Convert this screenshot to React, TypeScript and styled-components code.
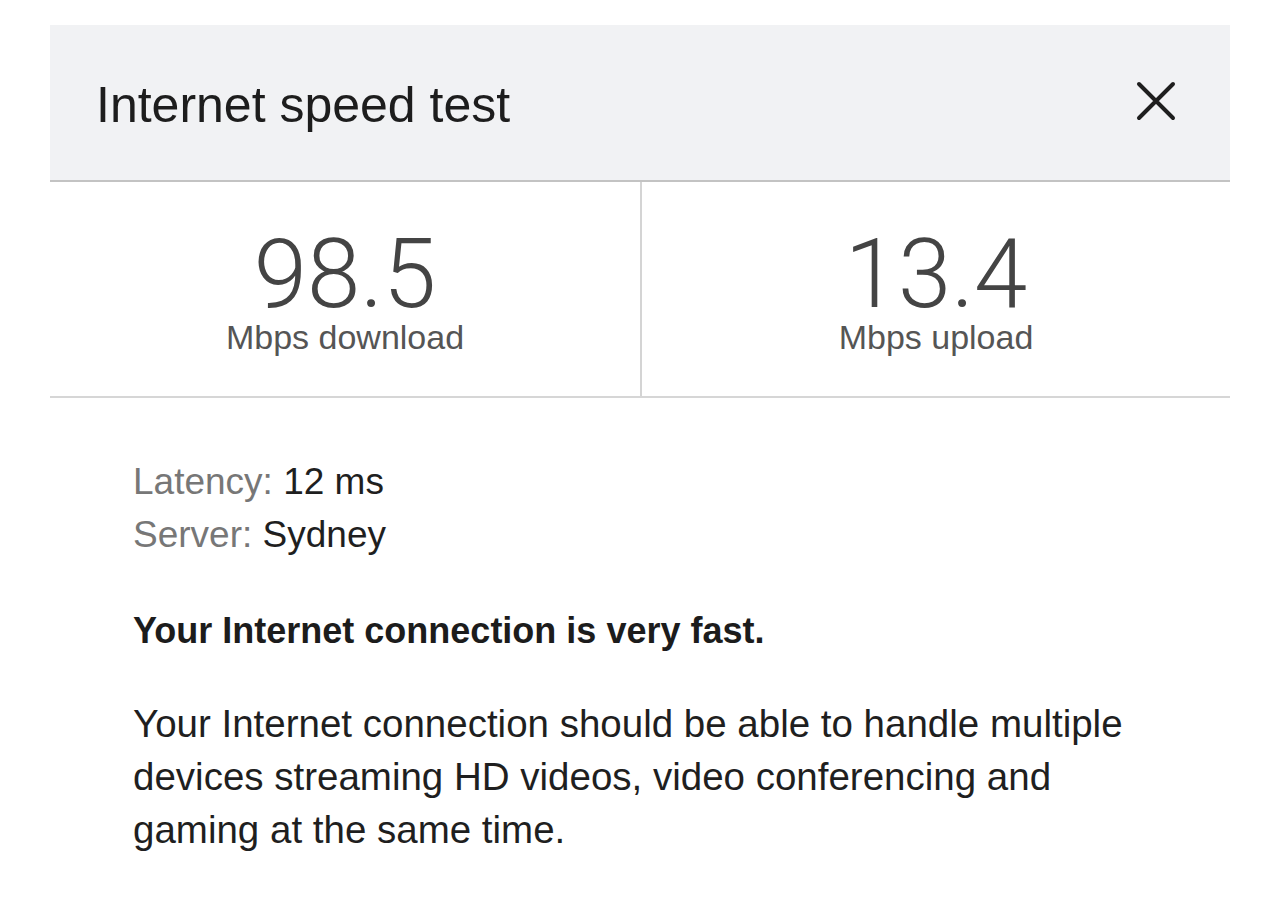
import React from "react";
import styled, { createGlobalStyle } from "styled-components";

const GlobalStyle = createGlobalStyle`
  html, body {
    margin: 0;
    padding: 0;
    background: #ffffff;
  }
  body {
    font-family: "Liberation Sans", Arial, Helvetica, sans-serif;
    color: #1f1f1f;
  }
`;

const Page = styled.div`
  padding: 25px 50px 0 50px;
  width: 1180px;
`;

const Panel = styled.section`
  display: flex;
  flex-direction: column;
  width: 100%;
`;

const Header = styled.header`
  display: flex;
  align-items: center;
  justify-content: space-between;
  height: 155px;
  padding: 0 54px 0 46px;
  background: #f1f2f4;
  border-bottom: 2px solid #c3c3c3;
`;

const Title = styled.h1`
  margin: 0;
  font-family: "Liberation Sans", Arial, sans-serif;
  font-weight: 400;
  font-size: 50px;
  line-height: 1;
  color: #1d1d1d;
  transform: translateY(2px);
`;

const CloseButton = styled.button`
  display: flex;
  align-items: center;
  justify-content: center;
  width: 40px;
  height: 40px;
  padding: 0;
  border: none;
  background: transparent;
  cursor: pointer;
  transform: translateY(-2px);
`;

const Stats = styled.div`
  display: grid;
  grid-template-columns: 1fr 1fr;
  border-bottom: 2px solid #d6d6d6;
`;

const StatCell = styled.div<{ $divider?: boolean }>`
  display: flex;
  flex-direction: column;
  align-items: center;
  padding: 47px 0 41px;
  border-left: ${(p) => (p.$divider ? "2px solid #d4d4d4" : "none")};
`;

const StatValue = styled.div`
  font-family: Roboto, "Liberation Sans", Arial, sans-serif;
  font-weight: 300;
  font-size: 96px;
  line-height: 90px;
  color: #444444;
`;

const StatLabel = styled.div`
  font-family: "Liberation Sans", Arial, sans-serif;
  font-size: 34px;
  line-height: 36px;
  color: #555555;
`;

const Body = styled.div`
  display: flex;
  flex-direction: column;
  padding: 57px 0 0 83px;
`;

const InfoList = styled.div`
  display: flex;
  flex-direction: column;
`;

const InfoLine = styled.div`
  font-size: 37px;
  line-height: 53px;
  color: #1f1f1f;
`;

const InfoKey = styled.span`
  color: #777777;
`;

const Verdict = styled.p`
  margin: 43px 0 0;
  font-weight: 700;
  font-size: 36px;
  line-height: 53px;
  color: #1c1c1c;
`;

const Description = styled.p`
  margin: 40px 0 0;
  width: 1040px;
  font-size: 38.5px;
  line-height: 53px;
  color: #1f1f1f;
`;

const CloseIcon = () => (
  <svg width="40" height="40" viewBox="0 0 40 40" aria-hidden="true">
    <path
      d="M3 3 L37 37 M37 3 L3 37"
      stroke="#1e1e1e"
      strokeWidth="4"
      strokeLinecap="round"
      fill="none"
    />
  </svg>
);

const stats = [
  { value: "98.5", label: "Mbps download" },
  { value: "13.4", label: "Mbps upload" },
];

export default function App() {
  return (
    <>
      <GlobalStyle />
      <Page>
        <Panel>
          <Header>
            <Title>Internet speed test</Title>
            <CloseButton aria-label="Close">
              <CloseIcon />
            </CloseButton>
          </Header>
          <Stats>
            {stats.map((s, i) => (
              <StatCell key={s.label} $divider={i > 0}>
                <StatValue>{s.value}</StatValue>
                <StatLabel>{s.label}</StatLabel>
              </StatCell>
            ))}
          </Stats>
          <Body>
            <InfoList>
              <InfoLine>
                <InfoKey>Latency:</InfoKey> 12 ms
              </InfoLine>
              <InfoLine>
                <InfoKey>Server:</InfoKey> Sydney
              </InfoLine>
            </InfoList>
            <Verdict>Your Internet connection is very fast.</Verdict>
            <Description>
              Your Internet connection should be able to handle multiple
              devices streaming HD videos, video conferencing and gaming at
              the same time.
            </Description>
          </Body>
        </Panel>
      </Page>
    </>
  );
}
